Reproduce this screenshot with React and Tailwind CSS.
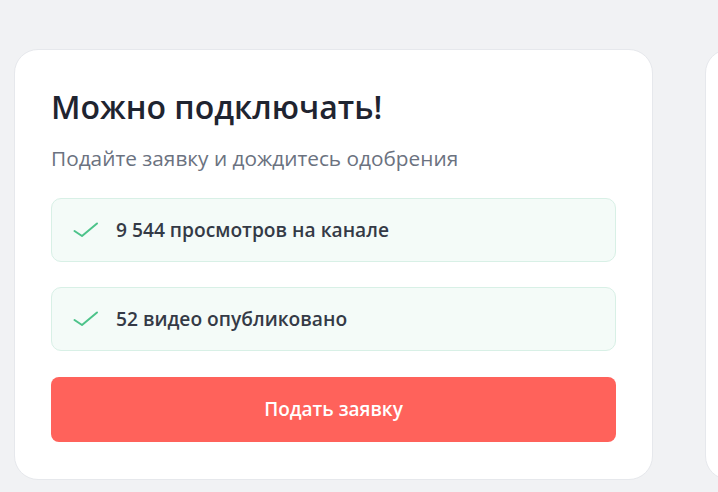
export default function App() {
  const items = ["9 544 просмотров на канале", "52 видео опубликовано"];
  return (
    <div
      className="h-[492px] w-[718px] overflow-hidden bg-[#f1f2f4] pt-[49px] pl-[14px]"
      style={{ fontFamily: '"Open Sans", "Noto Sans", sans-serif' }}
    >
      <div className="flex gap-[52px]">
        <div className="w-[639px] shrink-0 rounded-[24px] border border-[#e6e8ec] bg-white px-[36px] pt-[35px] pb-[37px]">
          <h2 className="text-[32px] font-semibold leading-[44px] text-[#1f2430]">
            Можно подключать!
          </h2>
          <p className="mt-[15px] text-[20.8px] leading-[28px] text-[#6b7280]">
            Подайте заявку и дождитесь одобрения
          </p>
          <div className="mt-[26px] flex flex-col gap-[25px]">
            {items.map((t) => (
              <div
                key={t}
                className="flex h-[64px] items-center rounded-[10px] border border-[#d8f0e6] bg-[#f4fbf8] pl-[21px]"
              >
                <svg width="26" height="16" viewBox="0 0 26 16" fill="none" className="shrink-0">
                  <polyline
                    points="1.5,9 9,14 24,1.5"
                    stroke="#4cc38a"
                    strokeWidth="2"
                    strokeLinecap="round"
                    strokeLinejoin="round"
                  />
                </svg>
                <span className="ml-[17px] text-[19.2px] font-semibold text-[#343a46]">{t}</span>
              </div>
            ))}
          </div>
          <button className="mt-[26px] flex h-[65px] w-full items-center justify-center rounded-[8px] bg-[#ff625b] text-[19px] font-semibold text-white">
            Подать заявку
          </button>
        </div>
        <div className="h-[431px] w-[639px] shrink-0 rounded-[24px] border border-[#e6e8ec] bg-white" />
      </div>
    </div>
  );
}
